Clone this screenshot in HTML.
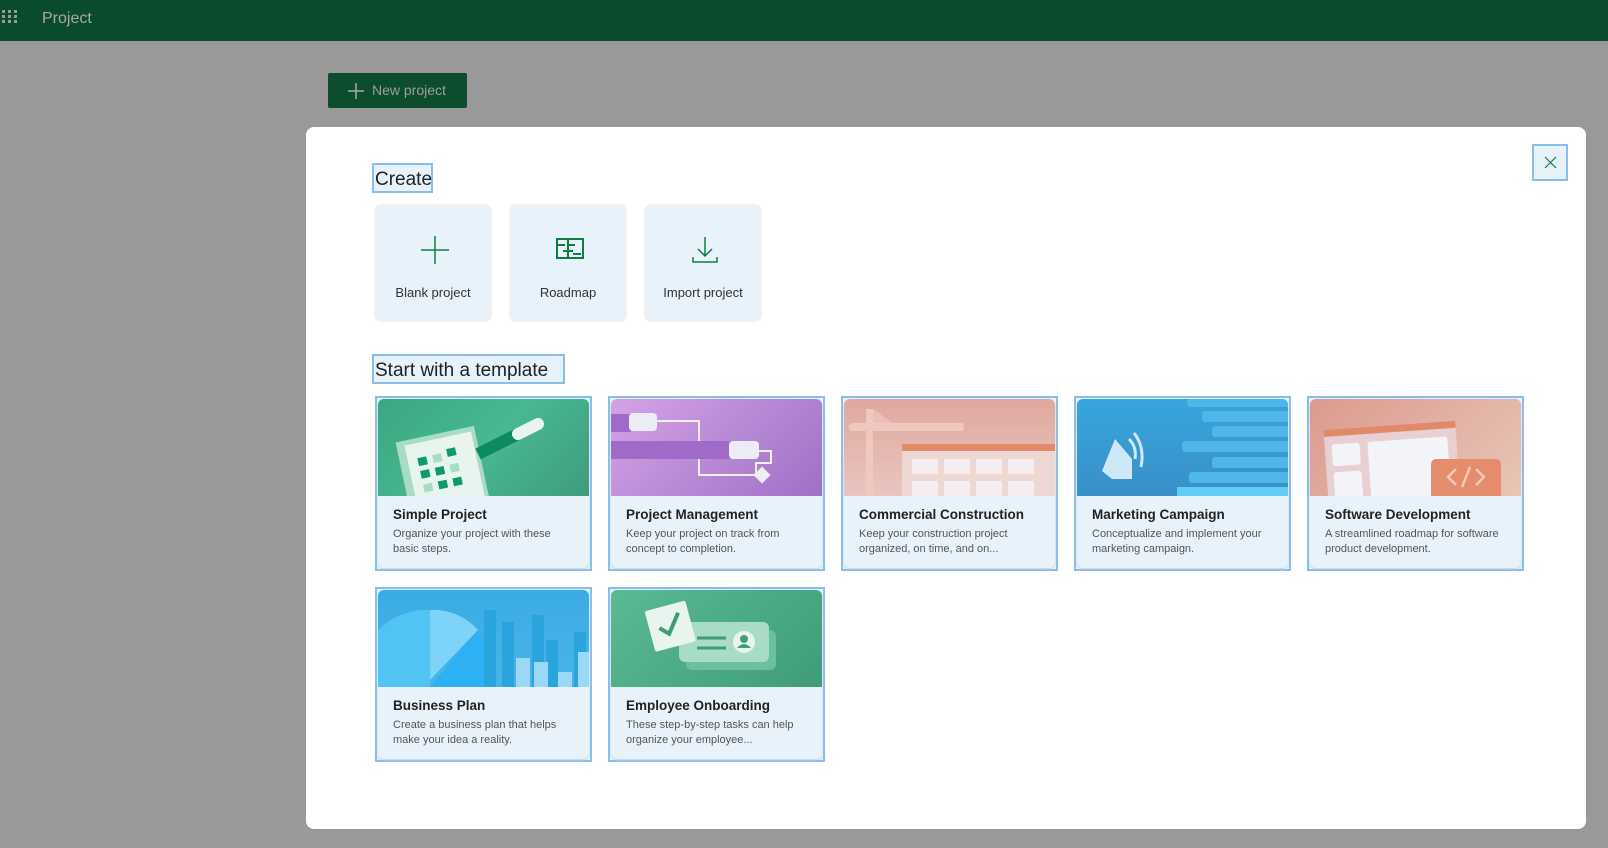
<!DOCTYPE html>
<html><head><meta charset="utf-8">
<style>
*{box-sizing:border-box;margin:0;padding:0}
body{width:1608px;height:848px;background:#999;font-family:"Liberation Sans",sans-serif;position:relative;overflow:hidden}
.hdr{position:absolute;left:0;top:0;width:1608px;height:41px;background:#094b2a}
.hdr .t{position:absolute;left:42px;top:10px;font-size:16px;color:#a9a9a9}
.np{position:absolute;left:328px;top:73px;width:139px;height:35px;background:#0b4d2c;border-radius:2px;color:#9e9e9e;font-size:14px;line-height:35px;padding-left:44px}
.np svg{position:absolute;left:20px;top:10px}
.modal{position:absolute;left:306px;top:127px;width:1280px;height:702px;background:#fff;border-radius:8px}
.close{position:absolute;left:1532px;top:144px;width:36px;height:37px;border:2px solid #86bfee;background:#e8f2fb}
.lbl{position:absolute;border:2px solid #86bfee;background:#e8f2fb;color:#222;font-size:19px;line-height:30px;padding:0 1px}
.tile{position:absolute;top:205px;width:116px;height:116px;border:2px solid #f0f0f0;border-radius:6px;background:#e8f2fb;box-shadow:0 0 2px #ddd}
.tile span{position:absolute;left:0;right:0;top:78px;text-align:center;font-size:13px;color:#333}
.tile svg{position:absolute;left:43px;top:28px}
.card{position:absolute;width:217px;height:175px;border:2px solid #86bfee;background:#e8f2fb}
.card .in{position:absolute;left:1px;top:1px;right:1px;bottom:1px;border-radius:6px;overflow:hidden;background:#e8f2fb;box-shadow:0 1px 2px #ccc}
.card .img{height:97px;position:relative;overflow:hidden}
.card h3{position:absolute;left:15px;top:108px;font-size:13.5px;font-weight:bold;color:#222}
.card p{position:absolute;left:15px;top:128px;width:185px;font-size:11px;line-height:15px;color:#555}
</style></head><body>
<div class="hdr">
<svg width="20" height="41" style="position:absolute;left:1px;top:0" fill="#999"><rect x="1" y="10" width="3" height="3"/><rect x="7" y="10" width="3" height="3"/><rect x="13" y="10" width="3" height="3"/><rect x="1" y="15" width="3" height="3"/><rect x="7" y="15" width="3" height="3"/><rect x="13" y="15" width="3" height="3"/><rect x="1" y="20" width="3" height="3"/><rect x="7" y="20" width="3" height="3"/><rect x="13" y="20" width="3" height="3"/></svg>
<div class="t">Project</div></div>
<div class="np"><svg width="16" height="16" stroke="#aaa" stroke-width="1.5"><path d="M8 0V16M0 8H16"/></svg>New project</div>
<div class="modal"></div>
<div class="close"><svg width="32" height="33" stroke="#0e7a4a" stroke-width="1.2"><path d="M11 11L22 22M22 11L11 22"/></svg></div>
<div class="lbl" style="left:372px;top:163px;width:61px;height:30px">Create</div>
<div class="tile" style="left:375px"><svg width="30" height="30" stroke="#107c41" stroke-width="1.5" fill="none"><path d="M15 1V29M1 15H29"/></svg><span>Blank project</span></div>
<div class="tile" style="left:510px"><svg width="30" height="30" stroke="#107c41" stroke-width="2" fill="none"><rect x="2" y="4" width="26" height="19"/><path d="M2 10H10M13 10H20M13 4V23M8 16H18M18 19H26"/></svg><span>Roadmap</span></div>
<div class="tile" style="left:645px"><svg width="30" height="30" stroke="#107c41" stroke-width="1.5" fill="none"><path d="M15 2V21M8 14L15 21L22 14M3 22V27H27V22"/></svg><span>Import project</span></div>
<div class="lbl" style="left:372px;top:354px;width:193px;height:30px">Start with a template</div>

<div class="card" style="left:375px;top:396px"><div class="in"><div class="img" style="background:linear-gradient(135deg,#3aa880,#48b892 50%,#3f9c7c)">
<svg width="213" height="97"><g transform="rotate(-12 60 60)"><rect x="22" y="35" width="80" height="90" fill="#a8dcc6"/><rect x="30" y="40" width="68" height="85" fill="#e8f5ef"/>
<g fill="#0e9a6a"><rect x="40" y="55" width="9" height="8"/><rect x="55" y="55" width="9" height="8" fill="#a8dcc6"/><rect x="70" y="52" width="9" height="8"/><rect x="40" y="68" width="9" height="8"/><rect x="55" y="68" width="9" height="8"/><rect x="70" y="68" width="9" height="8" fill="#a8dcc6"/><rect x="40" y="82" width="9" height="8" fill="#a8dcc6"/><rect x="55" y="82" width="9" height="8"/><rect x="70" y="82" width="9" height="8"/></g></g>
<path d="M100 55L160 25" stroke="#0e8a60" stroke-width="12"/><path d="M140 35L160 25" stroke="#e8f5ef" stroke-width="12" stroke-linecap="round"/></svg></div>
<h3>Simple Project</h3><p>Organize your project with these basic steps.</p></div></div>

<div class="card" style="left:608px;top:396px"><div class="in"><div class="img" style="background:linear-gradient(135deg,#d6a2e6,#b88ad6 50%,#a070c6)">
<svg width="213" height="97" fill="none"><rect x="0" y="15" width="20" height="18" fill="#a06ac8"/><rect x="18" y="14" width="28" height="18" rx="4" fill="#ececf4"/><path d="M46 22H88V76H148" stroke="#eee" stroke-width="2"/><rect x="0" y="42" width="120" height="18" fill="#a06ac8"/><rect x="118" y="42" width="30" height="18" rx="4" fill="#ececf4"/><path d="M148 52H160V64H145V78" stroke="#eee" stroke-width="2"/><rect x="145" y="70" width="12" height="12" fill="#eee" transform="rotate(45 151 76)"/></svg></div>
<h3>Project Management</h3><p>Keep your project on track from concept to completion.</p></div></div>

<div class="card" style="left:841px;top:396px"><div class="in"><div class="img" style="background:linear-gradient(180deg,#e0a89e,#e9c6c0)">
<svg width="213" height="97"><g fill="#f0c8c0"><rect x="22" y="10" width="7" height="87"/><path d="M29 10L60 32H29Z" opacity=".7"/><rect x="5" y="24" width="115" height="8" rx="3"/></g><rect x="58" y="45" width="155" height="7" fill="#e08a6a"/><rect x="58" y="52" width="155" height="45" fill="#eed8d4"/><g fill="#f4eef2"><rect x="68" y="60" width="26" height="15"/><rect x="100" y="60" width="26" height="15"/><rect x="132" y="60" width="26" height="15"/><rect x="164" y="60" width="26" height="15"/><rect x="68" y="82" width="26" height="15"/><rect x="100" y="82" width="26" height="15"/><rect x="132" y="82" width="26" height="15"/><rect x="164" y="82" width="26" height="15"/></g></svg></div>
<h3>Commercial Construction</h3><p>Keep your construction project organized, on time, and on...</p></div></div>

<div class="card" style="left:1074px;top:396px"><div class="in"><div class="img" style="background:linear-gradient(180deg,#36a6dc,#3a8fc8)">
<svg width="213" height="97"><g fill="#4fb6e8"><rect x="110" y="0" width="103" height="8" rx="3"/><rect x="125" y="12" width="88" height="11" rx="3"/><rect x="135" y="27" width="78" height="11" rx="3"/><rect x="105" y="42" width="108" height="11" rx="3"/><rect x="135" y="58" width="78" height="11" rx="3"/><rect x="112" y="73" width="101" height="11" rx="3"/></g><rect x="100" y="88" width="113" height="9" fill="#62cdf4"/><path d="M38 40L55 60V80L35 80L25 72Z" fill="#cde8f8"/><path d="M52 40Q60 48 58 60M57 34Q68 48 64 68" stroke="#cde8f8" stroke-width="3" fill="none"/></svg></div>
<h3>Marketing Campaign</h3><p>Conceptualize and implement your marketing campaign.</p></div></div>

<div class="card" style="left:1307px;top:396px"><div class="in"><div class="img" style="background:linear-gradient(135deg,#dc9a8e,#e3b4a8 60%,#e8c6b6)">
<svg width="213" height="97"><g transform="rotate(-4 100 50)"><rect x="15" y="25" width="132" height="90" fill="#e8cfd2"/><rect x="15" y="25" width="132" height="7" fill="#e08a6a"/><rect x="22" y="40" width="28" height="22" rx="3" fill="#f2f4f8"/><rect x="22" y="68" width="28" height="40" rx="3" fill="#f2f4f8"/><rect x="58" y="40" width="80" height="70" rx="3" fill="#f2f4f8"/></g><rect x="121" y="60" width="70" height="40" rx="5" fill="#e48c6c"/><path d="M146 70L138 78L146 86M166 70L174 78L166 86M160 68L152 88" stroke="#f4c8b8" stroke-width="2.5" fill="none"/></svg></div>
<h3>Software Development</h3><p>A streamlined roadmap for software product development.</p></div></div>

<div class="card" style="left:375px;top:587px"><div class="in"><div class="img" style="background:linear-gradient(180deg,#3aace4,#4ab4e8)">
<svg width="213" height="97"><path d="M52 20A70 70 0 0 0 0 40V97H52Z" fill="#52c4f4"/><path d="M52 20A60 60 0 0 1 100 40L52 90Z" fill="#7ed4f8"/><path d="M100 40Q120 70 118 97H52Z" fill="#2eb0f4"/><g fill="#2aa4dc"><rect x="106" y="20" width="12" height="77"/><rect x="124" y="32" width="12" height="65"/><rect x="154" y="25" width="12" height="72"/><rect x="168" y="50" width="12" height="47"/><rect x="196" y="42" width="12" height="55"/></g><g fill="#9ad8f6"><rect x="138" y="68" width="14" height="29"/><rect x="156" y="72" width="14" height="25"/><rect x="180" y="82" width="14" height="15"/><rect x="200" y="62" width="13" height="35"/></g></svg></div>
<h3>Business Plan</h3><p>Create a business plan that helps make your idea a reality.</p></div></div>

<div class="card" style="left:608px;top:587px"><div class="in"><div class="img" style="background:linear-gradient(135deg,#5aba94,#4aa882 60%,#3f9c78)">
<svg width="213" height="97"><rect x="75" y="40" width="90" height="40" rx="6" fill="#6cc09e"/><rect x="68" y="32" width="90" height="40" rx="6" fill="#a8dcc6"/><path d="M86 48H115M86 58H115" stroke="#3f9c78" stroke-width="3"/><circle cx="133" cy="52" r="11" fill="#e8f5ef"/><circle cx="133" cy="49" r="4" fill="#3f9c78"/><path d="M126 58Q133 50 140 58" fill="#3f9c78"/><g transform="rotate(-15 60 35)"><rect x="38" y="15" width="42" height="42" rx="2" fill="#e8f5ef"/><path d="M48 35L56 43L70 25" stroke="#3f9c78" stroke-width="4" fill="none"/></g></svg></div>
<h3>Employee Onboarding</h3><p>These step-by-step tasks can help organize your employee...</p></div></div>
</body></html>
